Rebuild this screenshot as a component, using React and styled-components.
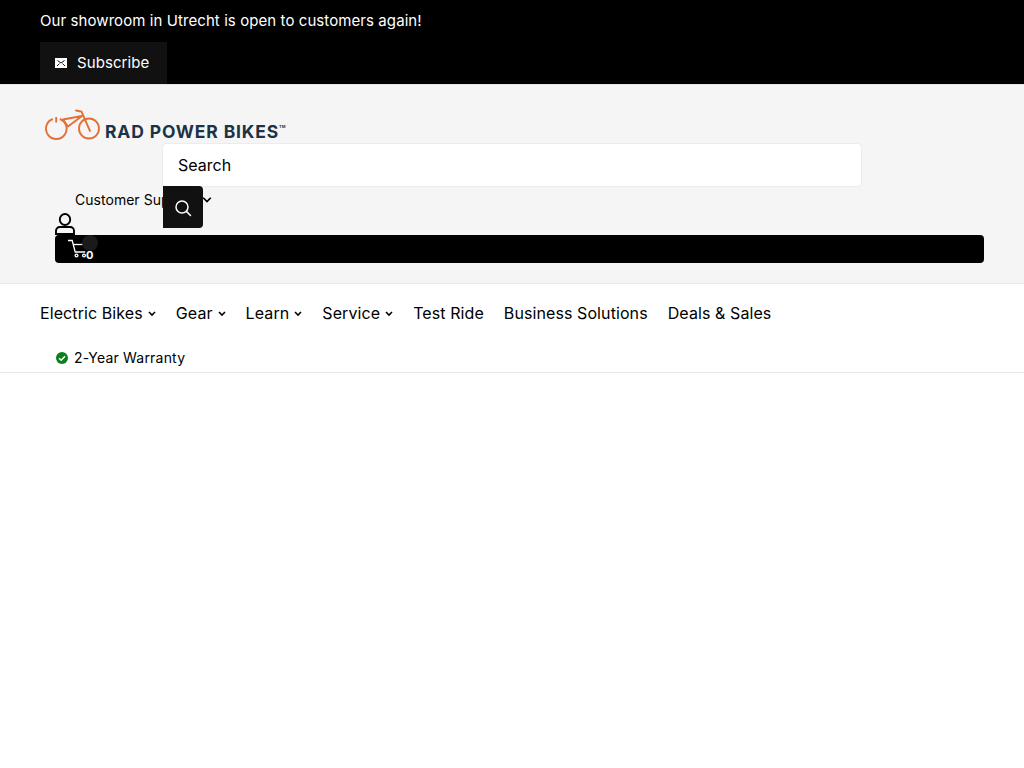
import React from "react";
import styled, { createGlobalStyle } from "styled-components";

const Global = createGlobalStyle`
  html, body { margin: 0; padding: 0; background: #fff; }
  body { font-family: Inter, "Liberation Sans", sans-serif; color: #000; }
  * { box-sizing: border-box; }
`;

const TopBar = styled.div`
  background: #000;
  height: 85px;
  padding: 0 40px;
  border-bottom: 1px solid #e6e6e6;
  color: #fff;
`;
const Announcement = styled.p`
  margin: 0;
  height: 42px;
  line-height: 42px;
  font-size: 15px;
  font-weight: 400;
  letter-spacing: 0.08px;
`;
const Subscribe = styled.a`
  display: inline-flex;
  align-items: center;
  gap: 10px;
  width: 127px;
  height: 42px;
  padding: 0 0 1px 15px;
  background: #111;
  font-size: 15px;
  font-weight: 400;
  letter-spacing: 0.08px;
`;
const Header = styled.header`
  background: #f5f5f5;
  height: 199px;
  padding: 23px 40px 0;
  border-bottom: 1px solid #e8e8e8;
`;
const LogoRow = styled.div`
  display: flex;
  align-items: flex-start;
  height: 35px;
  padding-left: 4px;
`;
const LogoSvg = styled.svg`
  flex: none;
`;
const LogoText = styled.span`
  font-family: Inter, "Open Sans", sans-serif;
  font-weight: 700;
  font-size: 17.5px;
  line-height: 18px;
  letter-spacing: 0.85px;
  color: #1d3345;
  margin: 15px 0 0 1px;
  white-space: nowrap;
`;
const Tm = styled.sup`
  font-size: 4px;
  line-height: 4px;
  vertical-align: 10px;
  letter-spacing: 0;
`;
const SearchBox = styled.div`
  position: relative;
  width: 700px;
  height: 44px;
  margin-left: 122px;
  padding-left: 15px;
  background: #fff;
  border: 1px solid #ececec;
  border-radius: 4px;
  font-size: 16px;
  font-weight: 400;
  line-height: 42px;
`;
const SearchButton = styled.button`
  position: absolute;
  left: 0;
  top: 42px;
  width: 40px;
  height: 42px;
  padding: 2px 0 0;
  border: 0;
  background: #111;
  border-radius: 0 4px 4px 0;
  display: flex;
  align-items: center;
  justify-content: center;
`;
const Support = styled.div`
  display: flex;
  align-items: center;
  height: 24px;
  padding-left: 35px;
  font-size: 14px;
  font-weight: 400;
  letter-spacing: 0.03px;
  white-space: nowrap;
`;
const SupportLabel = styled.span`
  width: 127px;
`;
const Account = styled.div`
  height: 24px;
  padding-left: 15px;
  display: flex;
  align-items: flex-end;
`;
const CartBar = styled.div`
  position: relative;
  height: 28px;
  margin: 0 0 0 15px;
  background: #000;
  border-radius: 4px;
`;
const CartHalo = styled.span`
  position: absolute;
  left: 27px;
  top: 0;
  width: 16px;
  height: 16px;
  border-radius: 50%;
  background: #1a1a1a;
`;
const CartIcon = styled.svg`
  position: absolute;
  left: 13px;
  top: 4px;
`;
const CartCount = styled.span`
  position: absolute;
  left: 31px;
  top: 14px;
  color: #fff;
  font-size: 11px;
  line-height: 13px;
  font-weight: 700;
`;
const Nav = styled.nav`
  height: 89px;
  padding: 0 40px;
  border-bottom: 1px solid #e8e8e8;
`;
const NavRow = styled.div`
  display: flex;
  align-items: center;
  gap: 20px;
  height: 58px;
`;
const NavItem = styled.a`
  display: inline-flex;
  align-items: center;
  gap: 5px;
  font-size: 16px;
  font-weight: 400;
  letter-spacing: 0.09px;
  white-space: nowrap;
`;
const Warranty = styled.div`
  display: flex;
  align-items: center;
  gap: 6px;
  height: 30px;
  padding: 0 0 0 16px;
  font-size: 14px;
  font-weight: 400;
  letter-spacing: 0.2px;
`;
const WarrantyIcon = styled.svg`
  margin-top: 2px;
`;

const Chevron = ({ size = 8, weight = 1.6 }) => (
  <svg width={size} height={size} viewBox="0 0 8 8" fill="none">
    <path d="M1 3 4 6 7 3" stroke="#000" strokeWidth={weight} />
  </svg>
);

const Logo = () => (
  <LogoSvg width="60" height="34" viewBox="44 107 60 34" fill="none" stroke="#e66f33" strokeWidth="1.9">
    <path d="M52.800 118A10.300 10.300 0 1 0 59.800 118" />
    <path d="M56.200 116v5.500" />
    <circle cx="89" cy="127.500" r="10" />
    <path d="M63 118.500 82 115 68 125.500Z" strokeLinejoin="round" />
    <path d="M76 109.500 81.500 110.500 90 130" strokeLinecap="round" />
  </LogoSvg>
);

const navItems = [
  ["Electric Bikes", true],
  ["Gear", true],
  ["Learn", true],
  ["Service", true],
  ["Test Ride", false],
  ["Business Solutions", false],
  ["Deals & Sales", false],
];

export default function App() {
  return (
    <>
      <Global />
      <TopBar>
        <Announcement>Our showroom in Utrecht is open to customers again!</Announcement>
        <Subscribe>
          <svg width="12" height="10" viewBox="0 0 12 10">
            <rect width="12" height="10" fill="#fff" />
            <path d="M2.500 2.500 6 5 9.500 2.500M2 8 4.500 5.600M10 8 7.500 5.600" stroke="#111" strokeWidth="1" fill="none" />
          </svg>
          Subscribe
        </Subscribe>
      </TopBar>
      <Header>
        <LogoRow>
          <Logo />
          <LogoText>RAD POWER BIKES<Tm>TM</Tm></LogoText>
        </LogoRow>
        <SearchBox>
          Search
          <SearchButton aria-label="Search">
            <svg width="18" height="18" viewBox="0 0 18 18" fill="none" stroke="#fff" strokeWidth="1.5">
              <circle cx="8" cy="8" r="6" />
              <path d="M12.400 12.400 16.500 16.500" strokeLinecap="round" />
            </svg>
          </SearchButton>
        </SearchBox>
        <Support>
          <SupportLabel>Customer Support</SupportLabel>
          <Chevron size={10} weight={1.4} />
        </Support>
        <Account>
          <svg width="20" height="22" viewBox="0 0 20 22" fill="none" stroke="#000" strokeWidth="1.9">
            <ellipse cx="10" cy="6.500" rx="5.200" ry="5.500" />
            <path d="M1 21v-3.200c0-2 1.600-3.800 3.800-3.800h10.400c2.200 0 3.800 1.800 3.800 3.800V21Z" />
          </svg>
        </Account>
        <CartBar>
          <CartHalo />
          <CartIcon width="20" height="20" viewBox="0 0 20 20" fill="none" stroke="#fff" strokeWidth="1.300">
            <path d="M0 1.500h4.200l3 11.500h10" />
            <path d="M5.300 5.500h9" />
            <circle cx="8.500" cy="16.500" r="1.400" />
            <circle cx="16" cy="16.500" r="1.400" />
          </CartIcon>
          <CartCount>0</CartCount>
        </CartBar>
      </Header>
      <Nav>
        <NavRow>
          {navItems.map(([label, hasMenu]) => (
            <NavItem key={label}>
              {label}
              {hasMenu && <Chevron />}
            </NavItem>
          ))}
        </NavRow>
        <Warranty>
          <WarrantyIcon width="12" height="12" viewBox="0 0 12 12">
            <circle cx="6" cy="6" r="6" fill="#0b7f1d" />
            <path d="M3 6.200 5.200 8.300 9 4.200" stroke="#fff" strokeWidth="1.500" fill="none" />
          </WarrantyIcon>
          2-Year Warranty
        </Warranty>
      </Nav>
    </>
  );
}
